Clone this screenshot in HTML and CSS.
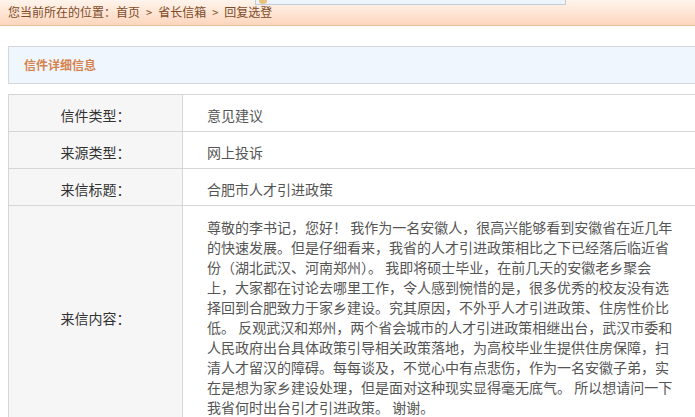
FILE: index.html
```html
<!DOCTYPE html>
<html lang="zh-CN">
<head>
    <meta charset="UTF-8">
    <meta name="viewport" content="width=device-width, initial-scale=1.0">
    <title>回复选登</title>
    <link rel="stylesheet" href="styles.css">
</head>
<body>
    <div class="crumb-bar">
        您当前所在的位置：<a href="#">首页</a><span class="sep">&gt;</span><a href="#">省长信箱</a><span class="sep">&gt;</span>回复选登
        <div class="top-search"><span class="top-search-icon"></span></div>
    </div>

    <div class="main">
        <div class="panel-head">信件详细信息</div>

        <table class="detail">
            <tr>
                <td class="label">信件类型：</td>
                <td class="value">意见建议</td>
            </tr>
            <tr>
                <td class="label">来源类型：</td>
                <td class="value">网上投诉</td>
            </tr>
            <tr>
                <td class="label">来信标题：</td>
                <td class="value">合肥市人才引进政策</td>
            </tr>
            <tr>
                <td class="label">来信内容：</td>
                <td class="value content">
                    <div class="letter">尊敬的李书记，您好！ 我作为一名安徽人，很高兴能够看到安徽省在近几年的快速发展。但是仔细看来，我省的人才引进政策相比之下已经落后临近省份（湖北武汉、河南郑州）。 我即将硕士毕业，在前几天的安徽老乡聚会上，大家都在讨论去哪里工作，令人感到惋惜的是，很多优秀的校友没有选择回到合肥致力于家乡建设。究其原因，不外乎人才引进政策、住房性价比低。 反观武汉和郑州，两个省会城市的人才引进政策相继出台，武汉市委和人民政府出台具体政策引导相关政策落地，为高校毕业生提供住房保障，扫清人才留汉的障碍。每每谈及，不觉心中有点悲伤，作为一名安徽子弟，实在是想为家乡建设处理，但是面对这种现实显得毫无底气。 所以想请问一下我省何时出台引才引进政策。 谢谢。</div>
                </td>
            </tr>
        </table>
    </div>
</body>
</html>
```

FILE: styles.css
```css
html, body {
    overflow-x: hidden;
}
body {
    margin: 0;
    font-family: "Noto Sans CJK SC", "Liberation Sans", sans-serif;
    background: #fff;
}
.crumb-bar {
    position: relative;
    height: 25px;
    padding-left: 8px;
    line-height: 24px;
    font-size: 12px;
    color: #7d4c28;
    background: linear-gradient(to bottom, #fff4ec, #fdd6bd);
    border-bottom: 1px solid #e8c29e;
}
.crumb-bar a {
    color: #7d4c28;
    text-decoration: none;
}
.crumb-bar .sep {
    margin: 0 6px;
    font-size: 11px;
}
.top-search {
    position: absolute;
    left: 255px;
    top: -7px;
    width: 309px;
    height: 10px;
    background: #eef4fc;
    border: 1px solid #c2ccd6;
}
.top-search-icon {
    position: absolute;
    left: 3px;
    top: 4px;
    width: 8px;
    height: 6px;
    border-radius: 50%;
    background: #e8c27a;
}
.main {
    padding: 20px 0 0 8px;
    width: 760px;
}
.panel-head {
    height: 36px;
    line-height: 36px;
    padding-left: 15px;
    font-size: 12px;
    font-weight: bold;
    color: #d5834e;
    background: #f0f6fd;
    border: 1px solid #d3d6da;
}
.detail {
    margin-top: 10px;
    width: 740px;
    border-collapse: collapse;
    font-size: 14px;
}
.detail td {
    border: 1px solid #d6d6d6;
    height: 33px;
    padding: 3px 0 0;
}
.detail .label {
    width: 173px;
    text-align: center;
    color: #333;
    background: #f6f6f6;
}
.detail .value {
    padding-left: 24px;
    color: #555;
}
.detail .content {
    padding-top: 11px;
    padding-bottom: 10px;
}
.letter {
    width: 470px;
    line-height: 20px;
}
```
